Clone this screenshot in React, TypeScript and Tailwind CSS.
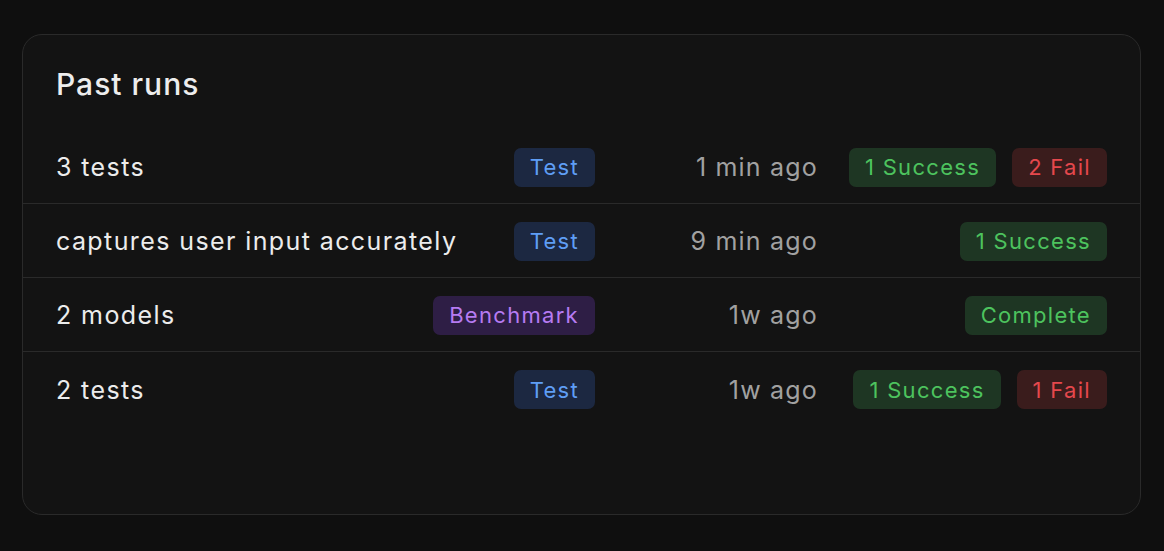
const RUNS = [
  { name: "3 tests", type: "Test", time: "1 min ago", status: [{ label: "1 Success", tone: "ok" }, { label: "2 Fail", tone: "fail" }] },
  { name: "captures user input accurately", type: "Test", time: "9 min ago", status: [{ label: "1 Success", tone: "ok" }] },
  { name: "2 models", type: "Benchmark", time: "1w ago", status: [{ label: "Complete", tone: "ok" }] },
  { name: "2 tests", type: "Test", time: "1w ago", status: [{ label: "1 Success", tone: "ok" }, { label: "1 Fail", tone: "fail" }] },
];

const TYPE_STYLES: Record<string, string> = {
  Test: "bg-[#1c2841] text-[#5f9ef5]",
  Benchmark: "bg-[#2e1e45] text-[#b67bf2]",
};

const TONE_STYLES: Record<string, string> = {
  ok: "bg-[#1e3623] text-[#4dc35e]",
  fail: "bg-[#3a1c1c] text-[#e5484d]",
};

function Badge({ className, children }: { className: string; children: React.ReactNode }) {
  return (
    <span className={`inline-flex h-[39px] items-center rounded-[7px] px-[16px] text-[22px] leading-none tracking-[1.3px] ${className}`}>
      {children}
    </span>
  );
}

export default function App() {
  return (
    <div className="min-h-[551px] bg-[#0f0f0f] pt-[34px] font-['Inter',sans-serif]">
      <div className="ml-[22px] h-[481px] w-[1119px] rounded-[20px] border border-[#2a2a2a] bg-[#131313]">
        <h2 className="px-[33px] pt-[31px] text-[30px] font-medium leading-[36px] tracking-[1px] text-[#ededed]">Past runs</h2>
        <div className="mt-[28px] divide-y divide-[#2a2a2a]">
          {RUNS.map((run, i) => (
            <div key={i} className="flex h-[74px] items-center pl-[33px] pr-[33px] pt-px">
              <span className="flex-1 pt-[2px] text-[25px] tracking-[1.4px] text-[#ececec]">{run.name}</span>
              <Badge className={TYPE_STYLES[run.type]}>{run.type}</Badge>
              <span className="w-[223px] pt-[2px] text-right text-[25px] tracking-[1.2px] text-[#a1a1a1]">{run.time}</span>
              <div className="flex w-[289px] justify-end gap-4">
                {run.status.map((s) => (
                  <Badge key={s.label} className={TONE_STYLES[s.tone]}>{s.label}</Badge>
                ))}
              </div>
            </div>
          ))}
        </div>
      </div>
    </div>
  );
}
